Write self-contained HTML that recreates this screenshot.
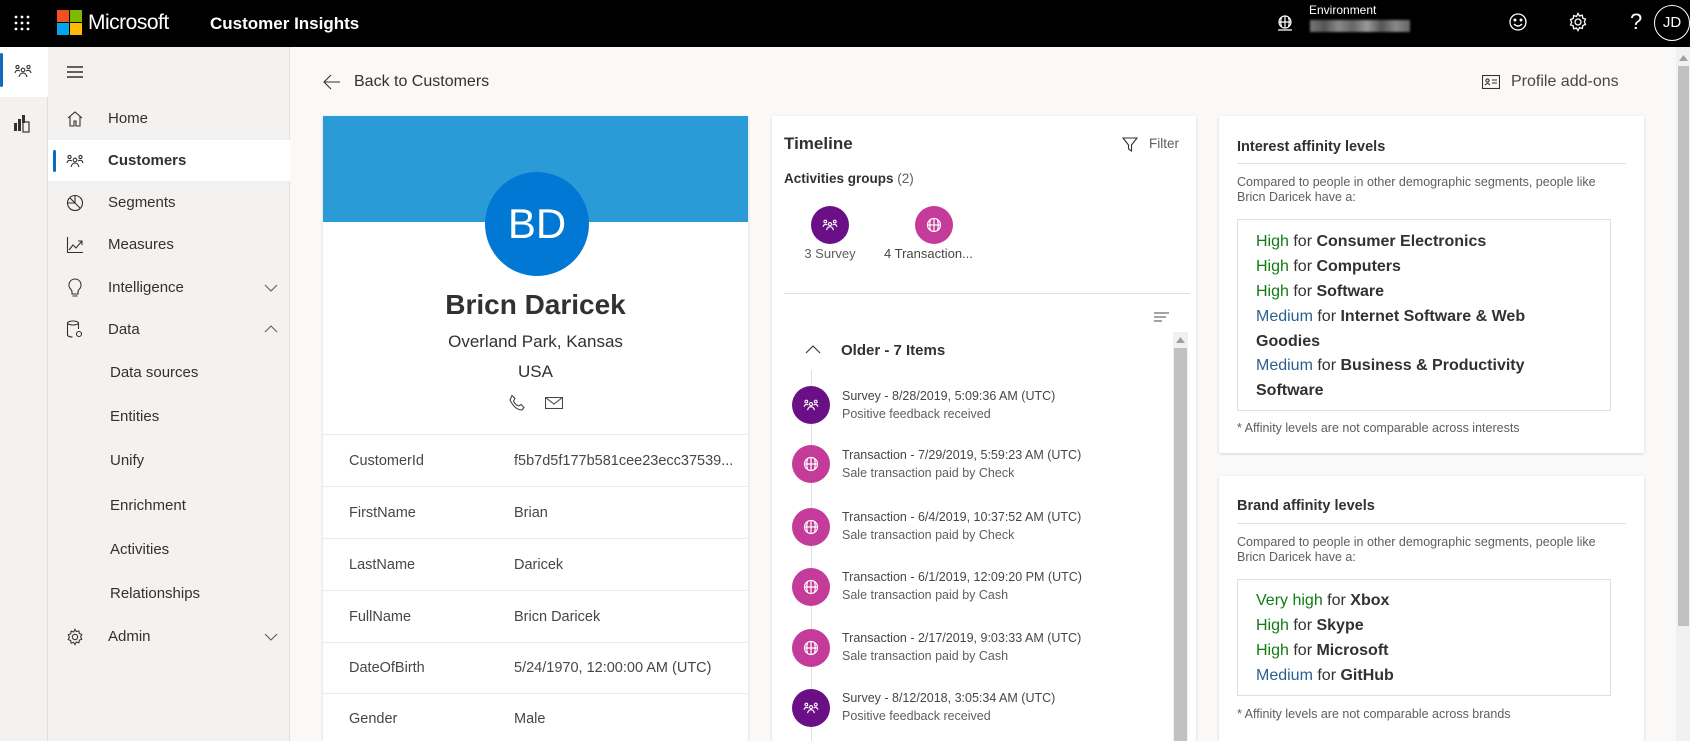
<!DOCTYPE html>
<html style="width:1690px;height:741px;overflow:hidden"><head><meta charset="utf-8"><style>
*{margin:0;padding:0;box-sizing:border-box}
body{width:1690px;height:741px;overflow:hidden;background:#faf9f8;font-family:"Liberation Sans",sans-serif;color:#323130;position:relative}
.a{position:absolute;white-space:nowrap}
.card{position:absolute;background:#fff;box-shadow:0 1px 3px rgba(0,0,0,.15);overflow:hidden}
.nav{position:absolute;left:108px;font-size:15px;line-height:20px;color:#323130}
.sub{position:absolute;left:110px;font-size:15px;line-height:20px}
.lbl{position:absolute;left:26px;font-size:14.5px;line-height:20px;color:#484644}
.val{position:absolute;left:191px;font-size:14.5px;line-height:20px;color:#484644}
.rowline{position:absolute;left:0;right:0;height:1px;background:#edebe9}
.dot{position:absolute;border-radius:50%;display:flex;align-items:center;justify-content:center}
.g{color:#107c10}.m{color:#2b5f8e}.b{font-weight:600;color:#323130}
.ti{position:absolute;left:70px;font-size:12.5px;line-height:16px;color:#484644}
.ts{position:absolute;left:70px;font-size:12.5px;line-height:16px;color:#605e5c}
.aff{position:absolute;left:18px;font-size:16px;line-height:24px;color:#323130}
</style></head><body>
<div class="a" style="left:0;top:0;width:1690px;height:47px;background:#000"></div>
<svg class="a" style="left:14px;top:15px" width="16" height="16" viewBox="0 0 16 16" fill="#fff"><circle cx="2" cy="2" r="1.4"/><circle cx="8" cy="2" r="1.4"/><circle cx="14" cy="2" r="1.4"/><circle cx="2" cy="8" r="1.4"/><circle cx="8" cy="8" r="1.4"/><circle cx="14" cy="8" r="1.4"/><circle cx="2" cy="14" r="1.4"/><circle cx="8" cy="14" r="1.4"/><circle cx="14" cy="14" r="1.4"/></svg>
<div class="a" style="left:57px;top:10px;width:12px;height:12px;background:#f25022"></div>
<div class="a" style="left:70px;top:10px;width:12px;height:12px;background:#7fba00"></div>
<div class="a" style="left:57px;top:23px;width:12px;height:12px;background:#00a4ef"></div>
<div class="a" style="left:70px;top:23px;width:12px;height:12px;background:#ffb900"></div>
<div class="a" style="left:88px;top:10px;font-size:21px;line-height:26px;color:#fff;letter-spacing:-.5px">Microsoft</div>
<div class="a" style="left:210px;top:13px;font-size:17px;line-height:22px;color:#fff;font-weight:600">Customer Insights</div>
<svg class="a" style="left:1276px;top:14px" width="18" height="18" viewBox="0 0 18 18" fill="none" stroke="#fff" stroke-width="1.2"><circle cx="9" cy="8" r="6"/><path d="M3 8h12M9 2v12M5.5 3.5q-1.5 4.5 0 9M12.5 3.5q1.5 4.5 0 9M2 16h14"/></svg>
<div class="a" style="left:1309px;top:3px;font-size:12px;line-height:15px;color:#fff">Environment</div>
<div class="a" style="left:1310px;top:20px;width:100px;height:12px;background:linear-gradient(90deg,#777,#555,#888,#666,#999,#555,#888,#666);filter:blur(1px)"></div>
<svg class="a" style="left:1508px;top:12px" width="20" height="20" viewBox="0 0 20 20" fill="none" stroke="#fff" stroke-width="1.3"><circle cx="10" cy="10" r="8"/><circle cx="7" cy="8" r=".8" fill="#fff"/><circle cx="13" cy="8" r=".8" fill="#fff"/><path d="M6 12q4 4 8 0"/></svg>
<svg class="a" style="left:1568px;top:12px" width="20" height="20" viewBox="0 0 20 20" fill="none" stroke="#fff" stroke-width="1.3"><circle cx="10" cy="10" r="3"/><path d="M10 1.5l1.5 2.5 2.8-.8.5 2.9 2.7 1-1.2 2.7 1.2 2.7-2.7 1-.5 2.9-2.8-.8L10 18.5l-1.5-2.5-2.8.8-.5-2.9-2.7-1 1.2-2.7-1.2-2.7 2.7-1 .5-2.9 2.8.8z"/></svg>
<div class="a" style="left:1630px;top:9px;font-size:22px;line-height:26px;color:#fff">?</div>
<div class="a" style="left:1654px;top:5px;width:36px;height:36px;border:1px solid #fff;border-radius:50%;color:#fff;font-size:15px;line-height:34px;text-align:center">JD</div>
<div class="a" style="left:0;top:47px;width:48px;height:694px;background:#f3f2f1;border-right:1px solid #e1dfdd"></div>
<div class="a" style="left:0;top:47px;width:48px;height:50px;background:#fff"></div>
<div class="a" style="left:0;top:53px;width:3px;height:34px;background:#0f6cbd;border-radius:2px"></div>
<svg class="a" style="left:14px;top:64px" width="18" height="14" viewBox="0 0 18 14" fill="none" stroke="#323130" stroke-width="1.1"><circle cx="3.5" cy="3" r="1.6"/><circle cx="14.5" cy="3" r="1.6"/><circle cx="9" cy="6" r="1.8"/><path d="M1 9q1-4 5-2M17 9q-1-4-5-2M5 13q1-4 4-4t4 4"/></svg>
<svg class="a" style="left:14px;top:113px" width="16" height="20" viewBox="0 0 16 20" fill="#323130"><rect x="0" y="10" width="3" height="8"/><rect x="4" y="6" width="3" height="12"/><rect x="8" y="2" width="3" height="8"/><rect x="9" y="9" width="6" height="10" fill="none" stroke="#323130" stroke-width="1.2"/></svg>
<div class="a" style="left:48px;top:47px;width:242px;height:694px;background:#f3f2f1;border-right:1px solid #e1dfdd"></div>
<svg class="a" style="left:66px;top:65px" width="18" height="14" viewBox="0 0 18 14" stroke="#323130" stroke-width="1.4"><path d="M1 2h16M1 7h16M1 12h16"/></svg>
<div class="a" style="left:48px;top:140px;width:242px;height:41px;background:#fff"></div>
<div class="a" style="left:53px;top:150px;width:3px;height:22px;background:#0f6cbd;border-radius:2px"></div>
<svg class="a" style="left:66px;top:110px" width="18" height="18" viewBox="0 0 18 18" fill="none" stroke="#323130" stroke-width="1.1"><path d="M2 8L9 2l7 6M4 6.5V16h4v-5h2v5h4V6.5"/></svg>
<div class="nav" style="top:109px">Home</div>
<svg class="a" style="left:66px;top:154px" width="18" height="14" viewBox="0 0 18 14" fill="none" stroke="#323130" stroke-width="1.1"><circle cx="3.5" cy="3" r="1.6"/><circle cx="14.5" cy="3" r="1.6"/><circle cx="9" cy="6" r="1.8"/><path d="M1 9q1-4 5-2M17 9q-1-4-5-2M5 13q1-4 4-4t4 4"/></svg>
<div class="nav" style="top:151px;font-weight:600">Customers</div>
<svg class="a" style="left:66px;top:194px" width="18" height="18" viewBox="0 0 18 18" fill="none" stroke="#323130" stroke-width="1.1"><circle cx="9" cy="9" r="7.5"/><path d="M9 1.5V9l5 5M9 9H1.5M4 4l5 5"/></svg>
<div class="nav" style="top:193px">Segments</div>
<svg class="a" style="left:66px;top:236px" width="18" height="18" viewBox="0 0 18 18" fill="none" stroke="#323130" stroke-width="1.1"><path d="M1.5 1v15.5H17M3 14l4-5 3 3 6-7M12 5h4v4"/></svg>
<div class="nav" style="top:235px">Measures</div>
<svg class="a" style="left:67px;top:278px" width="16" height="20" viewBox="0 0 16 20" fill="none" stroke="#323130" stroke-width="1.1"><path d="M8 1a6 6 0 0 0-4 10.5c.7.7 1 1.5 1 2.5v2h6v-2c0-1 .3-1.8 1-2.5A6 6 0 0 0 8 1zM5.5 18h5"/></svg>
<div class="nav" style="top:278px">Intelligence</div>
<svg class="a" style="left:264px;top:284px" width="14" height="8" viewBox="0 0 14 8" fill="none" stroke="#605e5c" stroke-width="1.1"><path d="M1 1l6 6 6-6"/></svg>
<svg class="a" style="left:66px;top:320px" width="18" height="20" viewBox="0 0 18 20" fill="none" stroke="#323130" stroke-width="1.1"><ellipse cx="7" cy="3" rx="5.5" ry="2"/><path d="M1.5 3v12c0 1.2 2.5 2 5 2M12.5 3v6"/><circle cx="13" cy="14" r="2.5"/></svg>
<div class="nav" style="top:320px">Data</div>
<svg class="a" style="left:264px;top:325px" width="14" height="8" viewBox="0 0 14 8" fill="none" stroke="#605e5c" stroke-width="1.1"><path d="M1 7l6-6 6 6"/></svg>
<div class="sub" style="top:363px">Data sources</div>
<div class="sub" style="top:407px">Entities</div>
<div class="sub" style="top:451px">Unify</div>
<div class="sub" style="top:496px">Enrichment</div>
<div class="sub" style="top:540px">Activities</div>
<div class="sub" style="top:584px">Relationships</div>
<svg class="a" style="left:66px;top:628px" width="18" height="18" viewBox="0 0 20 20" fill="none" stroke="#323130" stroke-width="1.2"><circle cx="10" cy="10" r="3"/><path d="M10 1.5l1.5 2.5 2.8-.8.5 2.9 2.7 1-1.2 2.7 1.2 2.7-2.7 1-.5 2.9-2.8-.8L10 18.5l-1.5-2.5-2.8.8-.5-2.9-2.7-1 1.2-2.7-1.2-2.7 2.7-1 .5-2.9 2.8.8z"/></svg>
<div class="nav" style="top:627px">Admin</div>
<svg class="a" style="left:264px;top:633px" width="14" height="8" viewBox="0 0 14 8" fill="none" stroke="#605e5c" stroke-width="1.1"><path d="M1 1l6 6 6-6"/></svg>
<svg class="a" style="left:323px;top:74px" width="18" height="16" viewBox="0 0 18 16" fill="none" stroke="#323130" stroke-width="1.1"><path d="M17 8H1M8 1L1 8l7 7"/></svg>
<div class="a" style="left:354px;top:72px;font-size:16px;line-height:20px;color:#323130">Back to Customers</div>
<svg class="a" style="left:1482px;top:75px" width="18" height="14" viewBox="0 0 18 14" fill="none" stroke="#323130" stroke-width="1.1"><rect x=".5" y=".5" width="17" height="13"/><circle cx="5.5" cy="5.5" r="1.6"/><path d="M3 10q2.5-3 5 0M10 5h5M10 8h5"/></svg>
<div class="a" style="left:1511px;top:72px;font-size:16px;line-height:20px;color:#484644">Profile add-ons</div>
<div class="card" style="left:323px;top:116px;width:425px;height:625px">
 <div class="a" style="left:0;top:0;width:425px;height:106px;background:#2b9bd8"></div>
 <div class="dot" style="left:162px;top:56px;width:104px;height:104px;background:#0078d4;color:#fff;font-size:42px">BD</div>
 <div class="a" style="left:0;width:425px;text-align:center;top:172px;font-size:28px;line-height:34px;font-weight:600;color:#323130">Bricn Daricek</div>
 <div class="a" style="left:0;width:425px;text-align:center;top:215px;font-size:17px;line-height:22px">Overland Park, Kansas</div>
 <div class="a" style="left:0;width:425px;text-align:center;top:245px;font-size:17px;line-height:22px">USA</div>
 <svg class="a" style="left:185px;top:278px" width="18" height="18" viewBox="0 0 18 18" fill="none" stroke="#484644" stroke-width="1.1"><path d="M4 1.5l3 3-1.5 2.5q1.5 3.5 5 5l2.5-1.5 3 3-2 2.5Q7 16 2 6z"/></svg>
 <svg class="a" style="left:222px;top:281px" width="18" height="12" viewBox="0 0 18 12" fill="none" stroke="#484644" stroke-width="1.1"><rect x=".5" y=".5" width="17" height="11"/><path d="M.5 .5L9 7l8.5-6.5"/></svg>
 <div class="rowline" style="top:318px"></div>
 <div class="lbl" style="top:335px">CustomerId</div><div class="val" style="top:335px">f5b7d5f177b581cee23ecc37539...</div>
 <div class="rowline" style="top:370px"></div>
 <div class="lbl" style="top:387px">FirstName</div><div class="val" style="top:387px">Brian</div>
 <div class="rowline" style="top:422px"></div>
 <div class="lbl" style="top:439px">LastName</div><div class="val" style="top:439px">Daricek</div>
 <div class="rowline" style="top:474px"></div>
 <div class="lbl" style="top:491px">FullName</div><div class="val" style="top:491px">Bricn Daricek</div>
 <div class="rowline" style="top:526px"></div>
 <div class="lbl" style="top:542px">DateOfBirth</div><div class="val" style="top:542px">5/24/1970, 12:00:00 AM (UTC)</div>
 <div class="rowline" style="top:577px"></div>
 <div class="lbl" style="top:593px">Gender</div><div class="val" style="top:593px">Male</div>
</div>
<div class="card" style="left:772px;top:116px;width:424px;height:625px">
 <div class="a" style="left:12px;top:17px;font-size:17px;line-height:22px;font-weight:600">Timeline</div>
 <svg class="a" style="left:350px;top:21px" width="16" height="16" viewBox="0 0 16 16" fill="none" stroke="#323130" stroke-width="1.1"><path d="M1 1h14L9.5 8v6l-3-2V8z"/></svg>
 <div class="a" style="left:377px;top:19px;font-size:13.5px;line-height:18px;color:#605e5c">Filter</div>
 <div class="a" style="left:12px;top:54px;font-size:13.5px;line-height:18px;font-weight:600">Activities groups <span style="font-weight:400;color:#605e5c">(2)</span></div>
 <div class="dot" style="left:39px;top:90px;width:38px;height:38px;background:#6b0f86"><svg width="16" height="12" viewBox="0 0 18 14" fill="none" stroke="#fff" stroke-width="1.3"><circle cx="3.5" cy="3" r="1.6"/><circle cx="14.5" cy="3" r="1.6"/><circle cx="9" cy="6" r="1.8"/><path d="M1 9q1-4 5-2M17 9q-1-4-5-2M5 13q1-4 4-4t4 4"/></svg></div>
 <div class="a" style="left:20px;width:76px;text-align:center;top:129px;font-size:13px;line-height:18px;color:#605e5c">3 Survey</div>
 <div class="dot" style="left:143px;top:90px;width:38px;height:38px;background:#c43b9a"><svg width="16" height="16" viewBox="0 0 16 16" fill="none" stroke="#fff" stroke-width="1.2"><circle cx="8" cy="8" r="6.5"/><path d="M1.5 8h13M8 1.5v13M4.5 3q-1.5 5 0 10M11.5 3q1.5 5 0 10"/></svg></div>
 <div class="a" style="left:112px;top:129px;font-size:13px;line-height:18px;color:#484644">4 Transaction...</div>
 <div class="a" style="left:12px;top:177px;width:406px;height:1px;background:#e1dfdd"></div>
 <svg class="a" style="left:382px;top:196px" width="15" height="10" viewBox="0 0 15 10" stroke="#484644" stroke-width="1.1"><path d="M0 1h15M0 5h12M0 9h8"/></svg>
 <div class="a" style="left:401px;top:216px;width:15px;height:409px;background:#f1f1f1"></div>
 <div class="a" style="left:402px;top:232px;width:13px;height:393px;background:#c1c1c1"></div>
 <svg class="a" style="left:404px;top:221px" width="9" height="6"><path d="M0 6L4.5 0 9 6z" fill="#a0a0a0"/></svg>
 <svg class="a" style="left:33px;top:229px" width="16" height="9" viewBox="0 0 16 9" fill="none" stroke="#323130" stroke-width="1.1"><path d="M1 8l7-7 7 7"/></svg>
 <div class="a" style="left:69px;top:225px;font-size:15px;line-height:20px;font-weight:600">Older - 7 Items</div>
 <div class="a" style="left:39px;top:254px;width:1px;height:400px;background:#e1dfdd"></div>
 <div class="dot" style="left:20px;top:270px;width:38px;height:38px;background:#6b0f86"><svg width="16" height="12" viewBox="0 0 18 14" fill="none" stroke="#fff" stroke-width="1.3"><circle cx="3.5" cy="3" r="1.6"/><circle cx="14.5" cy="3" r="1.6"/><circle cx="9" cy="6" r="1.8"/><path d="M1 9q1-4 5-2M17 9q-1-4-5-2M5 13q1-4 4-4t4 4"/></svg></div>
 <div class="ti" style="top:272px">Survey - 8/28/2019, 5:09:36 AM (UTC)</div><div class="ts" style="top:290px">Positive feedback received</div>
 <div class="dot" style="left:20px;top:329px;width:38px;height:38px;background:#c43b9a"><svg width="16" height="16" viewBox="0 0 16 16" fill="none" stroke="#fff" stroke-width="1.2"><circle cx="8" cy="8" r="6.5"/><path d="M1.5 8h13M8 1.5v13M4.5 3q-1.5 5 0 10M11.5 3q1.5 5 0 10"/></svg></div>
 <div class="ti" style="top:331px">Transaction - 7/29/2019, 5:59:23 AM (UTC)</div><div class="ts" style="top:349px">Sale transaction paid by Check</div>
 <div class="dot" style="left:20px;top:392px;width:38px;height:38px;background:#c43b9a"><svg width="16" height="16" viewBox="0 0 16 16" fill="none" stroke="#fff" stroke-width="1.2"><circle cx="8" cy="8" r="6.5"/><path d="M1.5 8h13M8 1.5v13M4.5 3q-1.5 5 0 10M11.5 3q1.5 5 0 10"/></svg></div>
 <div class="ti" style="top:393px">Transaction - 6/4/2019, 10:37:52 AM (UTC)</div><div class="ts" style="top:411px">Sale transaction paid by Check</div>
 <div class="dot" style="left:20px;top:452px;width:38px;height:38px;background:#c43b9a"><svg width="16" height="16" viewBox="0 0 16 16" fill="none" stroke="#fff" stroke-width="1.2"><circle cx="8" cy="8" r="6.5"/><path d="M1.5 8h13M8 1.5v13M4.5 3q-1.5 5 0 10M11.5 3q1.5 5 0 10"/></svg></div>
 <div class="ti" style="top:453px">Transaction - 6/1/2019, 12:09:20 PM (UTC)</div><div class="ts" style="top:471px">Sale transaction paid by Cash</div>
 <div class="dot" style="left:20px;top:513px;width:38px;height:38px;background:#c43b9a"><svg width="16" height="16" viewBox="0 0 16 16" fill="none" stroke="#fff" stroke-width="1.2"><circle cx="8" cy="8" r="6.5"/><path d="M1.5 8h13M8 1.5v13M4.5 3q-1.5 5 0 10M11.5 3q1.5 5 0 10"/></svg></div>
 <div class="ti" style="top:514px">Transaction - 2/17/2019, 9:03:33 AM (UTC)</div><div class="ts" style="top:532px">Sale transaction paid by Cash</div>
 <div class="dot" style="left:20px;top:573px;width:38px;height:38px;background:#6b0f86"><svg width="16" height="12" viewBox="0 0 18 14" fill="none" stroke="#fff" stroke-width="1.3"><circle cx="3.5" cy="3" r="1.6"/><circle cx="14.5" cy="3" r="1.6"/><circle cx="9" cy="6" r="1.8"/><path d="M1 9q1-4 5-2M17 9q-1-4-5-2M5 13q1-4 4-4t4 4"/></svg></div>
 <div class="ti" style="top:574px">Survey - 8/12/2018, 3:05:34 AM (UTC)</div><div class="ts" style="top:592px">Positive feedback received</div>
</div>
<div class="card" style="left:1219px;top:116px;width:425px;height:337px">
 <div class="a" style="left:18px;top:21px;font-size:14.5px;line-height:20px;font-weight:600">Interest affinity levels</div>
 <div class="a" style="left:18px;top:47px;width:389px;height:1px;background:#e1dfdd"></div>
 <div class="a" style="left:18px;top:59px;font-size:12.5px;line-height:15px;color:#605e5c;white-space:normal;width:370px">Compared to people in other demographic segments, people like Bricn Daricek have a:</div>
 <div class="a" style="left:18px;top:103px;width:374px;height:192px;border:1px solid #e1dfdd">
  <div class="aff" style="top:10px"><span class="g">High</span> for <span class="b">Consumer Electronics</span></div>
  <div class="aff" style="top:35px"><span class="g">High</span> for <span class="b">Computers</span></div>
  <div class="aff" style="top:60px"><span class="g">High</span> for <span class="b">Software</span></div>
  <div class="aff" style="top:85px"><span class="m">Medium</span> for <span class="b">Internet Software &amp; Web</span></div>
  <div class="aff" style="top:110px"><span class="b">Goodies</span></div>
  <div class="aff" style="top:134px"><span class="m">Medium</span> for <span class="b">Business &amp; Productivity</span></div>
  <div class="aff" style="top:159px"><span class="b">Software</span></div>
 </div>
 <div class="a" style="left:18px;top:304px;font-size:12.5px;line-height:16px;color:#605e5c">* Affinity levels are not comparable across interests</div>
</div>
<div class="card" style="left:1219px;top:476px;width:425px;height:265px">
 <div class="a" style="left:18px;top:20px;font-size:14.5px;line-height:20px;font-weight:600">Brand affinity levels</div>
 <div class="a" style="left:18px;top:47px;width:389px;height:1px;background:#e1dfdd"></div>
 <div class="a" style="left:18px;top:59px;font-size:12.5px;line-height:15px;color:#605e5c;white-space:normal;width:370px">Compared to people in other demographic segments, people like Bricn Daricek have a:</div>
 <div class="a" style="left:18px;top:103px;width:374px;height:117px;border:1px solid #e1dfdd">
  <div class="aff" style="top:9px"><span class="g">Very high</span> for <span class="b">Xbox</span></div>
  <div class="aff" style="top:34px"><span class="g">High</span> for <span class="b">Skype</span></div>
  <div class="aff" style="top:59px"><span class="g">High</span> for <span class="b">Microsoft</span></div>
  <div class="aff" style="top:84px"><span class="m">Medium</span> for <span class="b">GitHub</span></div>
 </div>
 <div class="a" style="left:18px;top:230px;font-size:12.5px;line-height:16px;color:#605e5c">* Affinity levels are not comparable across brands</div>
</div>
<div class="a" style="left:1676px;top:47px;width:14px;height:694px;background:#f1f1f1"></div>
<div class="a" style="left:1678px;top:66px;width:11px;height:560px;background:#c1c1c1"></div>
<svg class="a" style="left:1679px;top:55px" width="9" height="6"><path d="M0 6L4.5 0 9 6z" fill="#a0a0a0"/></svg>
</body></html>
